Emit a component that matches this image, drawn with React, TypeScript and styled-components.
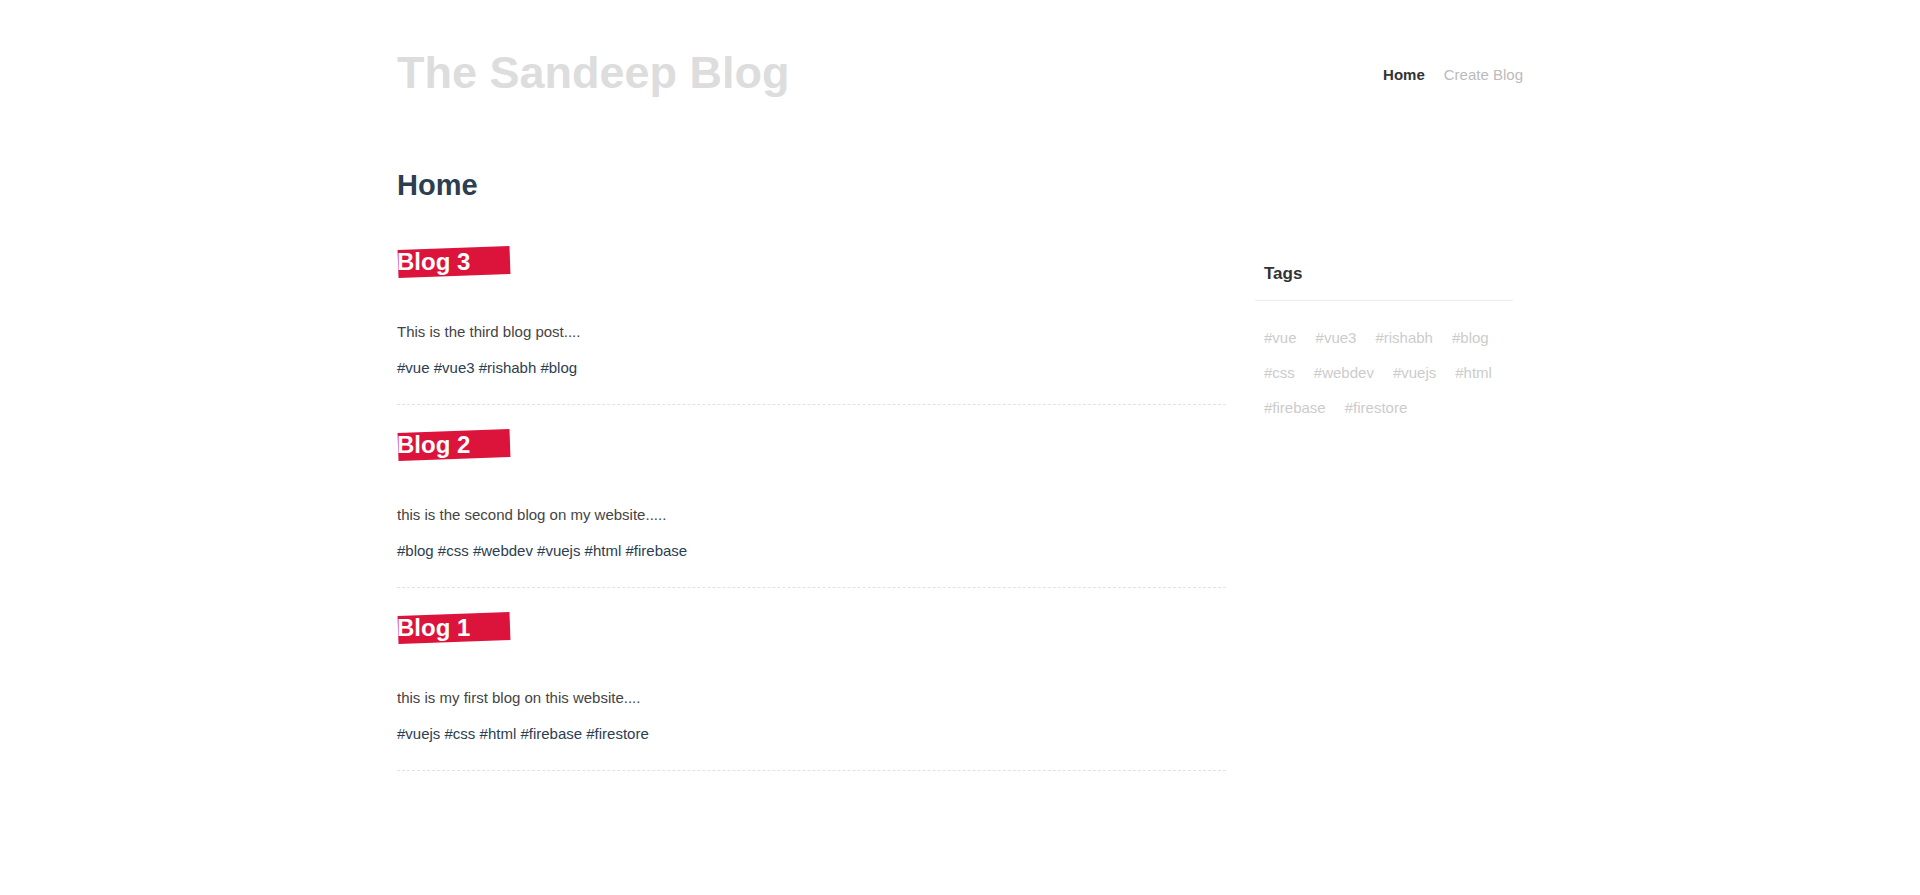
import React from "react";
import styled, { createGlobalStyle } from "styled-components";

const GlobalStyle = createGlobalStyle`
  html, body { margin: 0; padding: 0; background: #ffffff; }
  body {
    font-family: "Liberation Sans", Arial, Helvetica, sans-serif;
    color: #2c3e50;
    -webkit-font-smoothing: antialiased;
  }
  * { box-sizing: border-box; }
`;

const Page = styled.div`
  max-width: 1126px;
  margin: 0 auto;
  padding-top: 47px;
`;

const Header = styled.header`
  display: flex;
  align-items: center;
  justify-content: space-between;
`;

const Title = styled.h1`
  margin: 0;
  font-size: 45px;
  line-height: 52px;
  font-weight: 700;
  color: #dddddd;
`;

const Nav = styled.nav`
  display: flex;
  gap: 19px;
  padding-top: 2px;
`;

const NavLink = styled.a<{ $active?: boolean }>`
  font-size: 15px;
  line-height: 17px;
  text-decoration: none;
  font-weight: ${(p) => (p.$active ? 700 : 400)};
  color: ${(p) => (p.$active ? "#333333" : "#bbbbbb")};
  cursor: pointer;
`;

const PageTitle = styled.h2`
  margin: 70px 0 0;
  font-size: 29px;
  line-height: 33px;
  font-weight: 700;
  color: #2c3e50;
`;

const Layout = styled.div`
  display: grid;
  grid-template-columns: 829px 258px;
  column-gap: 29px;
  align-items: start;
  margin-top: 20px;
`;

const PostList = styled.div`
  display: flex;
  flex-direction: column;
`;

const Post = styled.article`
  padding: 26px 0 28px;
  border-bottom: 1px dashed #e2e2e2;
`;

const PostTitle = styled.h3`
  display: inline-block;
  position: relative;
  z-index: 0;
  margin: 0;
  font-size: 24px;
  line-height: 28px;
  font-weight: 700;
  color: #ffffff;

  &::before {
    content: "";
    position: absolute;
    z-index: -1;
    top: 0;
    left: 1px;
    width: 100%;
    height: 100%;
    padding-right: 39px;
    box-sizing: content-box;
    background: #dc143c;
    transform: rotate(-2deg);
  }
`;

const PostBody = styled.p`
  margin: 47px 0 0;
  font-size: 15px;
  line-height: 17px;
  color: #444444;
`;

const PostTags = styled.p`
  margin: 19px 0 0;
  font-size: 15px;
  line-height: 17px;
  color: #2c3e50;
`;

const Sidebar = styled.aside`
  padding-top: 42px;
`;

const SidebarHeading = styled.h3`
  margin: 0;
  padding: 0 9px 16px;
  font-size: 17px;
  line-height: 20px;
  font-weight: 700;
  color: #333333;
  border-bottom: 1px solid #eeeeee;
`;

const TagCloud = styled.div`
  display: flex;
  flex-wrap: wrap;
  column-gap: 19px;
  padding: 19px 9px 0;
`;

const TagLink = styled.a`
  font-size: 15px;
  line-height: 35px;
  color: #cccccc;
  text-decoration: none;
  cursor: pointer;
`;

const posts = [
  { title: "Blog 3", body: "This is the third blog post....", tags: ["vue", "vue3", "rishabh", "blog"] },
  { title: "Blog 2", body: "this is the second blog on my website.....", tags: ["blog", "css", "webdev", "vuejs", "html", "firebase"] },
  { title: "Blog 1", body: "this is my first blog on this website....", tags: ["vuejs", "css", "html", "firebase", "firestore"] },
];

const allTags = ["vue", "vue3", "rishabh", "blog", "css", "webdev", "vuejs", "html", "firebase", "firestore"];

export default function App() {
  return (
    <>
      <GlobalStyle />
      <Page>
        <Header>
          <Title>The Sandeep Blog</Title>
          <Nav>
            <NavLink $active>Home</NavLink>
            <NavLink>Create Blog</NavLink>
          </Nav>
        </Header>
        <PageTitle>Home</PageTitle>
        <Layout>
          <PostList>
            {posts.map((p) => (
              <Post key={p.title}>
                <PostTitle>{p.title}</PostTitle>
                <PostBody>{p.body}</PostBody>
                <PostTags>{p.tags.map((t) => `#${t}`).join(" ")}</PostTags>
              </Post>
            ))}
          </PostList>
          <Sidebar>
            <SidebarHeading>Tags</SidebarHeading>
            <TagCloud>
              {allTags.map((t) => (
                <TagLink key={t}>#{t}</TagLink>
              ))}
            </TagCloud>
          </Sidebar>
        </Layout>
      </Page>
    </>
  );
}
